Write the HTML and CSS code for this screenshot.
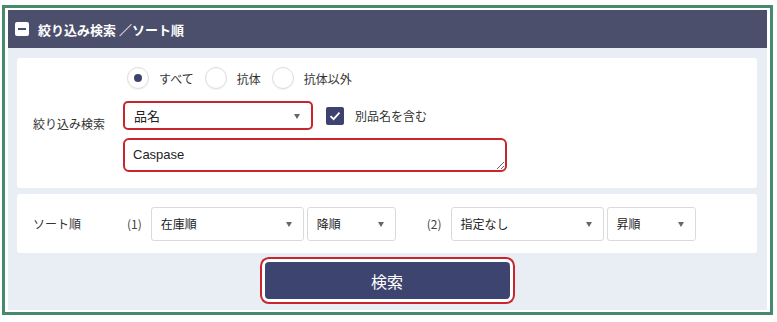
FILE: index.html
```html
<!DOCTYPE html>
<html lang="ja">
<head>
    <meta charset="UTF-8">
    <meta name="viewport" content="width=device-width, initial-scale=1.0">
    <title>絞り込み検索 / ソート順</title>
    <link rel="stylesheet" href="styles.css">
</head>
<body>

    <div class="frame">
        <div class="panel">
            <div class="panelHead">
                <span class="toggleIcon"></span>
                <span class="panelTitle">絞り込み検索 ／ソート順</span>
            </div>

            <div class="panelBody">
                <div class="card filterCard">
                    <div class="rowLabel">絞り込み検索</div>
                    <div class="filterControls">
                        <div class="radioRow">
                            <span class="radio checked"></span><span class="radioText">すべて</span>
                            <span class="radio"></span><span class="radioText">抗体</span>
                            <span class="radio"></span><span class="radioText">抗体以外</span>
                        </div>
                        <div class="fieldRow">
                            <div class="select fieldSelect highlighted">品名</div>
                            <span class="checkbox">
                                <svg width="12" height="10" viewBox="0 0 12 10"><path d="M1.5 5.2 L4.6 8.2 L10.5 1.6" fill="none" stroke="#fff" stroke-width="1.8"/></svg>
                            </span>
                            <span class="checkText">別品名を含む</span>
                        </div>
                        <textarea class="keyword highlighted">Caspase</textarea>
                    </div>
                </div>

                <div class="card sortCard">
                    <div class="rowLabel">ソート順</div>
                    <span class="sortNo">(1)</span>
                    <div class="select sortKey">在庫順</div>
                    <div class="select sortDir">降順</div>
                    <span class="sortNo second">(2)</span>
                    <div class="select sortKey">指定なし</div>
                    <div class="select sortDir">昇順</div>
                </div>

                <div class="actions">
                    <button class="searchBtn">検索</button>
                </div>
            </div>
        </div>
    </div>

</body>
</html>
```

FILE: styles.css
```css
body {
    margin: 0;
    font-family: 'Noto Sans CJK JP', 'Noto Sans', sans-serif;
    color: #333;
    background-color: #fff;
}

.frame {
    margin: 5px 4px 0 2px;
    border: 3px solid #468a6c;
    padding: 2px 3px 2px 3px;
    background-color: #fff;
}

.panelHead {
    height: 38px;
    background-color: #4c4f6b;
    display: flex;
    align-items: center;
    padding-left: 7px;
}

.toggleIcon {
    width: 14px;
    height: 14px;
    background-color: #fff;
    border-radius: 2px;
    position: relative;
}

.toggleIcon::after {
    content: '';
    position: absolute;
    left: 3px;
    top: 6px;
    width: 8px;
    height: 2px;
    background-color: #4c4f6b;
}

.panelTitle {
    color: #fff;
    font-weight: bold;
    font-size: 13px;
    margin-left: 9px;
}

.panelBody {
    background-color: #e9eef5;
    padding: 10px 10px 11px 9px;
}

.card {
    background-color: #fff;
    border-radius: 3px;
    padding: 0 16px;
}

.rowLabel {
    width: 90px;
    flex-shrink: 0;
    font-size: 12px;
}

/* filter card */
.filterCard {
    display: flex;
    align-items: center;
    height: 130px;
}

.filterControls {
    align-self: flex-start;
    display: flex;
    flex-direction: column;
    padding-top: 8px;
}

.radioRow {
    display: flex;
    align-items: center;
    height: 24px;
    font-size: 12px;
}

.radio {
    width: 22px;
    height: 22px;
    box-sizing: border-box;
    border: 1px solid #dcdcdc;
    border-radius: 50%;
    margin-left: 11px;
    box-shadow: 0 1px 1px rgba(0, 0, 0, 0.06);
    position: relative;
}

.radio:first-child {
    margin-left: 4px;
}

.radio.checked::after {
    content: '';
    position: absolute;
    left: 6px;
    top: 6px;
    width: 8px;
    height: 8px;
    border-radius: 50%;
    background-color: #3d4270;
}

.radioText {
    margin-left: 10px;
}

.fieldRow {
    display: flex;
    align-items: center;
    margin-top: 11px;
}

.select {
    box-sizing: border-box;
    position: relative;
    display: flex;
    align-items: center;
    background-color: #fff;
    border: 1px solid #dadada;
    border-radius: 3px;
    padding-left: 9px;
    font-size: 12px;
    color: #222;
}

.select::after {
    content: '';
    position: absolute;
    right: 11px;
    top: 50%;
    margin-top: -2px;
    border-left: 3.5px solid transparent;
    border-right: 3.5px solid transparent;
    border-top: 5px solid #666;
}

.highlighted {
    border: 2px solid #c9252c;
    border-radius: 5px;
}

.fieldSelect {
    width: 190px;
    height: 29px;
    font-size: 13px;
}

.checkbox {
    width: 18px;
    height: 18px;
    margin-left: 13px;
    background-color: #3d4270;
    border-radius: 2px;
    display: flex;
    align-items: center;
    justify-content: center;
}

.checkText {
    font-size: 12px;
    margin-left: 11px;
}

.keyword {
    box-sizing: border-box;
    width: 384px;
    height: 34px;
    margin: 8px 0 0 0;
    padding: 7px 8px 0 8px;
    font-family: 'Liberation Sans', Arial, sans-serif;
    font-size: 13px;
    color: #222;
    outline: none;
    border-radius: 6px;
}

/* sort card */
.sortCard {
    display: flex;
    align-items: center;
    height: 59px;
    margin-top: 6px;
}

.sortNo {
    font-size: 12px;
    margin-left: 4px;
    margin-right: 9px;
    color: #444;
}

.sortNo.second {
    margin-left: 31px;
}

.sortKey {
    width: 153px;
    height: 34px;
}

.sortDir {
    width: 89px;
    height: 34px;
    margin-left: 3px;
}

/* button */
.actions {
    display: flex;
    justify-content: center;
    margin-top: 9px;
}

.searchBtn {
    width: 245px;
    height: 37px;
    background-color: #3d4470;
    color: #fff;
    border: none;
    border-radius: 4px;
    font-family: 'Noto Sans CJK JP', sans-serif;
    font-size: 16px;
    box-shadow: 0 0 0 3px #fff, 0 0 0 5px #c9252c;
    cursor: pointer;
}
```
